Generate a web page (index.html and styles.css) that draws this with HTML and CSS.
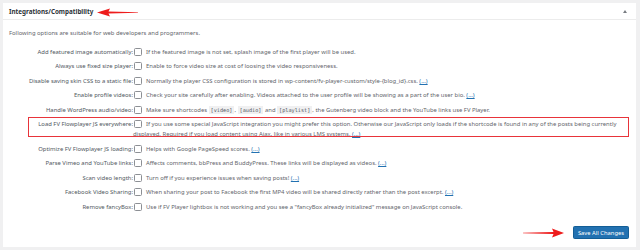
FILE: index.html
```html
<!DOCTYPE html>
<html lang="en">
<head>
    <meta charset="UTF-8">
    <meta name="viewport" content="width=device-width, initial-scale=1.0">
    <title>Integrations/Compatibility</title>
    <link rel="stylesheet" href="styles.css">
</head>
<body>
    <div class="postbox">
        <div class="postbox-header">
            <h2 class="postbox-title">Integrations/Compatibility</h2>
            <svg class="note-arrow note-arrow-left" width="42" height="9" viewBox="0 0 42 9">
                <path d="M0 4.5 L13 0.5 L11.5 3.6 L41 4.3 L41 4.7 L11.5 5.4 L13 8.5 Z" fill="#ee1c1c"/>
            </svg>
            <span class="toggle-caret"></span>
        </div>

        <div class="inside">
            <p class="intro">Following options are suitable for web developers and programmers.</p>

            <table class="form-table">
                <tr>
                    <th>Add featured image automatically:</th>
                    <td><input type="checkbox">If the featured image is not set, splash image of the first player will be used.</td>
                </tr>
                <tr>
                    <th>Always use fixed size player:</th>
                    <td><input type="checkbox">Enable to force video size at cost of loosing the video responsiveness.</td>
                </tr>
                <tr>
                    <th>Disable saving skin CSS to a static file:</th>
                    <td><input type="checkbox">Normally the player CSS configuration is stored in wp-content/fv-player-custom/style-{blog_id}.css. <a href="#">(...)</a></td>
                </tr>
                <tr>
                    <th>Enable profile videos:</th>
                    <td><input type="checkbox">Check your site carefully after enabling. Videos attached to the user profile will be showing as a part of the user bio. <a href="#">(...)</a></td>
                </tr>
                <tr>
                    <th>Handle WordPress audio/video:</th>
                    <td><input type="checkbox">Make sure shortcodes <code>[video]</code>, <code>[audio]</code> and <code>[playlist]</code>, the Gutenberg video block and the YouTube links use FV Player.</td>
                </tr>
                <tr class="marked">
                    <th>Load FV Flowplayer JS everywhere:</th>
                    <td><input type="checkbox">If you use some special JavaScript integration you might prefer this option. Otherwise our JavaScript only loads if the shortcode is found in any of the posts being currently displayed. Required if you load content using Ajax, like in various LMS systems. <a href="#">(...)</a></td>
                </tr>
                <tr>
                    <th>Optimize FV Flowplayer JS loading:</th>
                    <td><input type="checkbox">Helps with Google PageSpeed scores. <a href="#">(...)</a></td>
                </tr>
                <tr>
                    <th>Parse Vimeo and YouTube links:</th>
                    <td><input type="checkbox">Affects comments, bbPress and BuddyPress. These links will be displayed as videos. <a href="#">(...)</a></td>
                </tr>
                <tr>
                    <th>Scan video length:</th>
                    <td><input type="checkbox">Turn off if you experience issues when saving posts! <a href="#">(...)</a></td>
                </tr>
                <tr>
                    <th>Facebook Video Sharing:</th>
                    <td><input type="checkbox">When sharing your post to Facebook the first MP4 video will be shared directly rather than the post excerpt. <a href="#">(...)</a></td>
                </tr>
                <tr>
                    <th>Remove fancyBox:</th>
                    <td><input type="checkbox">Use if FV Player lightbox is not working and you see a "fancyBox already initialized" message on JavaScript console.</td>
                </tr>
            </table>

            <div class="highlight-box"></div>

            <div class="actions">
                <svg class="note-arrow-right" width="42" height="10" viewBox="0 0 42 10">
                    <path d="M42 5 L30 0.5 L31.5 4 L1 4.7 L1 5.3 L31.5 6 L30 9.5 Z" fill="#ee1c1c"/>
                </svg>
                <button class="button-primary">Save All Changes</button>
            </div>
        </div>
    </div>
</body>
</html>
```

FILE: styles.css
```css
body {
    margin: 0;
    padding: 3px 4px 3px 3px;
    background: #f0f0f1;
    font-family: 'Noto Sans', sans-serif;
    font-size: 5.9px;
    color: #5f656b;
}

.postbox {
    position: relative;
    background: #fff;
    height: 244px;
    box-sizing: border-box;
}

.postbox-header {
    position: relative;
    display: flex;
    align-items: center;
    height: 17px;
    padding: 0 6px;
    border-bottom: 1px solid #ececec;
    box-sizing: border-box;
}

.postbox-title {
    margin: 0;
    font-size: 6.3px;
    font-weight: 700;
    color: #2c3338;
}

.note-arrow-left {
    position: absolute;
    left: 94px;
    top: 5px;
}

.toggle-caret {
    margin-left: auto;
    margin-right: 3px;
    width: 0;
    height: 0;
    border-left: 2px solid transparent;
    border-right: 2px solid transparent;
    border-bottom: 3px solid #787c82;
}

.inside {
    position: relative;
    padding: 8px 7px 0 6px;
}

.intro {
    margin: 0 0 6.5px;
    line-height: 10px;
}

.form-table {
    border-collapse: collapse;
    width: 100%;
}

.form-table th {
    width: 124px;
    padding: 2.25px 0;
    text-align: right;
    font-weight: 400;
    color: #50575e;
    vertical-align: top;
    line-height: 10px;
    white-space: nowrap;
}

.form-table td {
    padding: 2.25px 0;
    line-height: 10px;
    vertical-align: top;
}

.form-table input[type="checkbox"] {
    appearance: none;
    display: inline-block;
    width: 8px;
    height: 8px;
    margin: 0 4px 0 1px;
    border: 0.6px solid #8c8f94;
    border-radius: 1.5px;
    box-sizing: border-box;
    vertical-align: -2px;
    background: #fff;
}

.form-table code {
    font-family: 'DejaVu Sans Mono', monospace;
    font-size: 5.2px;
    background: #f0f0f1;
    padding: 1px 2px;
    color: #50575e;
}

.form-table a {
    color: #2271b1;
}

.highlight-box {
    position: absolute;
    left: 25px;
    top: 97px;
    width: 601px;
    height: 20px;
    border: 1.2px solid #e8343a;
    box-sizing: border-box;
}

.actions {
    display: flex;
    justify-content: flex-end;
    align-items: center;
    gap: 9px;
    margin-top: 12px;
}

.button-primary {
    height: 13px;
    padding: 0 4px;
    font-family: 'Noto Sans', sans-serif;
    font-size: 5.8px;
    color: #fff;
    background: #2271b1;
    border: 0.6px solid #135e96;
    border-radius: 1.5px;
    cursor: pointer;
}
```
